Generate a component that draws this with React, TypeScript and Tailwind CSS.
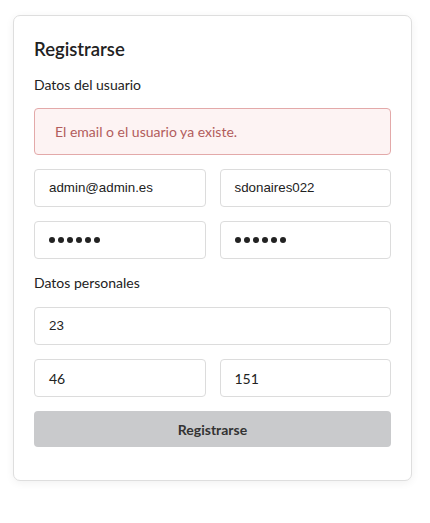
import React from "react";

const lato = "font-['Lato','Noto_Sans',sans-serif]";
const arial = "font-['Liberation_Sans',Arial,sans-serif] text-[13.33px]";

function Field({ value, font = arial, dots = false }: { value: string; font?: string; dots?: boolean }) {
  return (
    <div className="flex h-[38px] min-w-0 flex-1 items-center rounded-[4px] border border-[#dcdcdc] bg-white px-[14px]">
      {dots ? (
        <span className="flex gap-[3px]">
          {Array.from({ length: 6 }).map((_, i) => (
            <span key={i} className="h-[6px] w-[6px] rounded-full bg-[#222]" />
          ))}
        </span>
      ) : (
        <span className={`${font} text-[#222]`}>{value}</span>
      )}
    </div>
  );
}

export default function App() {
  return (
    <div className={`${lato} min-h-[523px] bg-white pl-[13px] pt-[15px]`}>
      <div className="w-[399px] rounded-[7px] border border-[#dedede] bg-white px-[20px] pb-[33px] pt-[21px] shadow-[0_2px_8px_rgba(0,0,0,0.06)]">
        <h1 className="text-[18.5px] font-semibold leading-[24px] text-[#222]">Registrarse</h1>
        <p className="mt-[15px] text-[14px] leading-[18px] text-[#222]">Datos del usuario</p>

        <div className="mt-[14px] flex h-[47px] items-center rounded-[4px] border border-[#e3a9a9] bg-[#fdf3f3] px-[20px]">
          <span className="text-[14px] text-[#b25c5c]">El email o el usuario ya existe.</span>
        </div>

        <div className="mt-[14px] flex gap-[14px]">
          <Field value="admin@admin.es" />
          <Field value="sdonaires022" />
        </div>
        <div className="mt-[14px] flex gap-[14px]">
          <Field value="" dots />
          <Field value="" dots />
        </div>

        <p className="mt-[14px] text-[14px] leading-[20px] text-[#222]">Datos personales</p>

        <div className="mt-[14px] flex">
          <Field value="23" />
        </div>
        <div className="mt-[14px] flex gap-[14px]">
          <Field value="46" font={`${lato} text-[14px]`} />
          <Field value="151" font={`${lato} text-[14px]`} />
        </div>

        <button
          type="button"
          className="mt-[14px] flex h-[36px] w-full items-center justify-center rounded-[4px] bg-[#c9cacc] text-[14px] font-bold text-[#333]"
        >
          Registrarse
        </button>
      </div>
    </div>
  );
}
